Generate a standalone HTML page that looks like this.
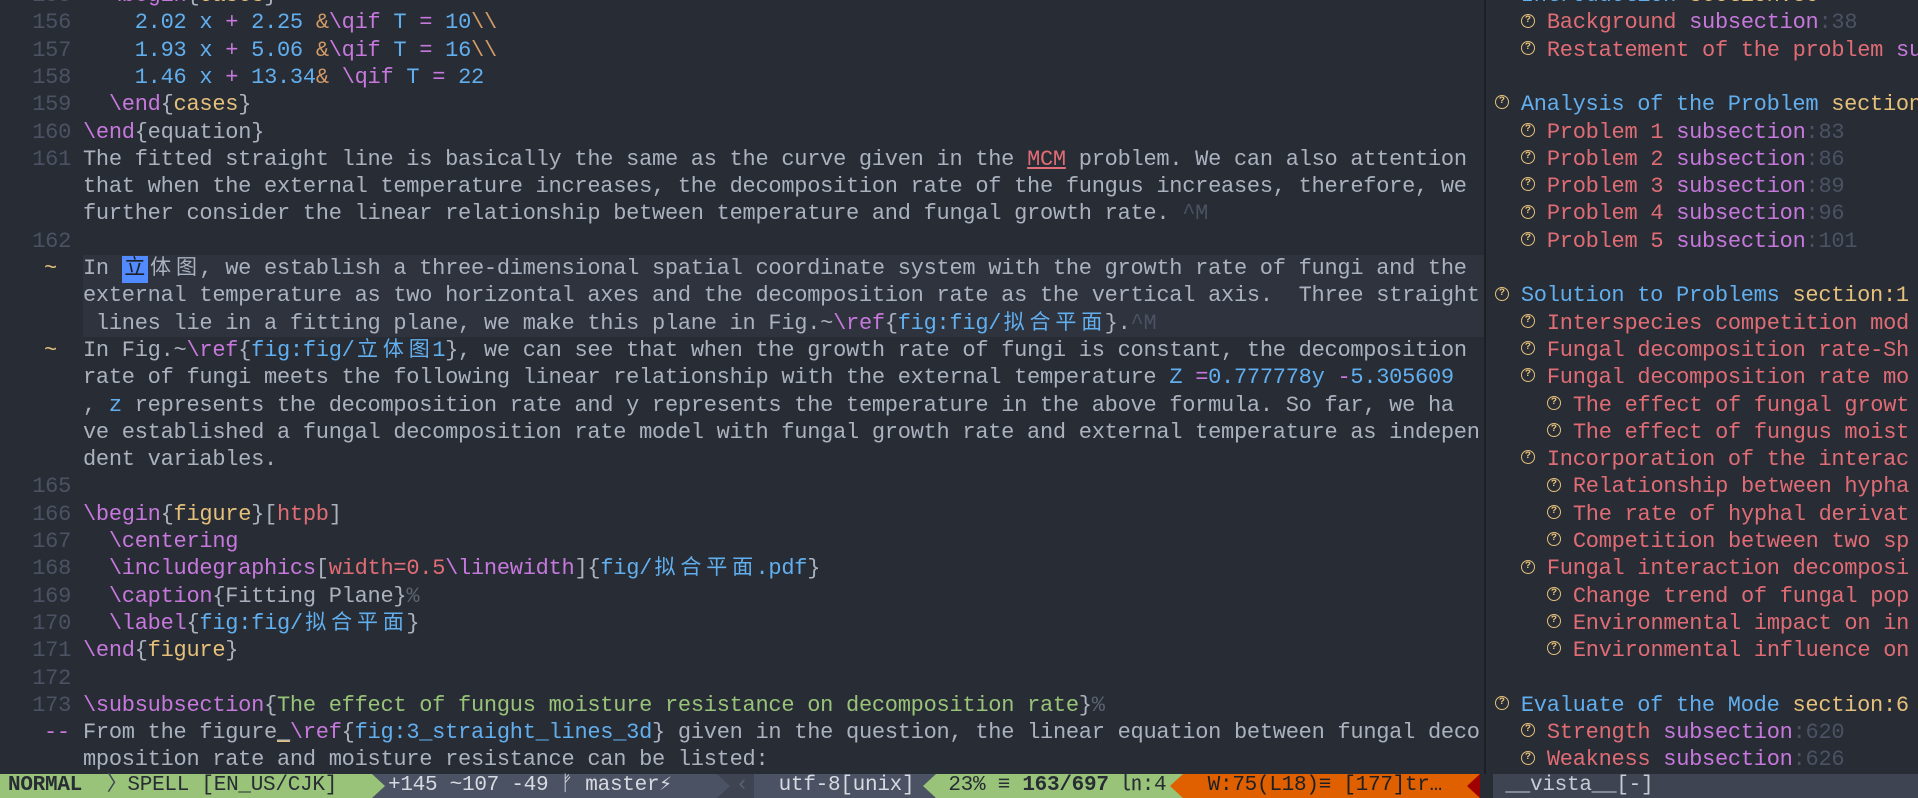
<!DOCTYPE html>
<html><head><meta charset="utf-8">
<style>
*{margin:0;padding:0;box-sizing:border-box}
body{width:1918px;height:798px;background:#282c34;overflow:hidden;position:relative;font-family:"Liberation Mono","Noto Sans CJK SC",monospace;font-size:22px;letter-spacing:-0.27px;color:#abb2bf}
.r{position:absolute;height:27.3px;line-height:27.3px;white-space:pre}
.t{left:83px}
.n{left:5px;width:66px;text-align:right;color:#4b5263}
.s{left:44px;color:#e5c07b}
.k{display:inline-block;width:25.86px;letter-spacing:0;text-align:center;font-size:21px}
.P{color:#c678dd}.Y{color:#e5c07b}.B{color:#61afef}.O{color:#d19a66}.R{color:#e06c75}.G{color:#98c379}.C{color:#5c6370}.D{color:#4b5263}
.cl{position:absolute;left:83px;width:1402px;height:81.9px;background:#2e333d}
.sep{position:absolute;left:1484px;top:0;width:2px;height:774px;background:#1c1f24}
.side{position:absolute;left:1486px;top:0;width:432px;height:774px;overflow:hidden}
.side .r{left:0}
.ic{display:inline-block;position:relative;top:-2px;width:14px;height:14px;border:1.7px solid #e5c07b;border-radius:50%;color:#e5c07b;font-size:10px;line-height:11px;text-align:center;font-weight:bold;letter-spacing:0;vertical-align:middle;margin-right:11.86px}
.st{position:absolute;top:774px;height:24px;line-height:24px;white-space:pre;font-size:21px}
</style></head><body>
<div class="cl" style="top:255px"></div>
<div class="sep"></div>

<div class="r n" style="top:-18px">155</div><div class="r t" style="top:-18px">  <span class="P">\begin</span>{<span class="Y">cases</span>}</div>
<div class="r n" style="top:9.35px">156</div><div class="r t" style="top:9.35px">    <span class="B">2.02 x</span> <span class="P">+</span> <span class="B">2.25</span> <span class="O">&amp;</span><span class="P">\qif</span> <span class="B">T</span> <span class="P">=</span> <span class="B">10</span><span class="O">\\</span></div>
<div class="r n" style="top:36.65px">157</div><div class="r t" style="top:36.65px">    <span class="B">1.93 x</span> <span class="P">+</span> <span class="B">5.06</span> <span class="O">&amp;</span><span class="P">\qif</span> <span class="B">T</span> <span class="P">=</span> <span class="B">16</span><span class="O">\\</span></div>
<div class="r n" style="top:63.95px">158</div><div class="r t" style="top:63.95px">    <span class="B">1.46 x</span> <span class="P">+</span> <span class="B">13.34</span><span class="O">&amp;</span> <span class="P">\qif</span> <span class="B">T</span> <span class="P">=</span> <span class="B">22</span></div>
<div class="r n" style="top:91.25px">159</div><div class="r t" style="top:91.25px">  <span class="P">\end</span>{<span class="Y">cases</span>}</div>
<div class="r n" style="top:118.55px">160</div><div class="r t" style="top:118.55px"><span class="P">\end</span>{equation}</div>
<div class="r n" style="top:145.85px">161</div><div class="r t" style="top:145.85px">The fitted straight line is basically the same as the curve given in the <span class="R" style="text-decoration:underline">MCM</span> problem. We can also attention</div>
<div class="r t" style="top:173.15px">that when the external temperature increases, the decomposition rate of the fungus increases, therefore, we</div>
<div class="r t" style="top:200.45px">further consider the linear relationship between temperature and fungal growth rate. <span class="D">^M</span></div>
<div class="r n" style="top:227.75px">162</div>
<div class="r s" style="top:255.05px">~</div><div class="r t" style="top:255.05px">In <span class="k" style="background:#528bff;color:#1c1f24">立</span><span class="k">体</span><span class="k">图</span>, we establish a three-dimensional spatial coordinate system with the growth rate of fungi and the</div>
<div class="r t" style="top:282.35px">external temperature as two horizontal axes and the decomposition rate as the vertical axis.  Three straight</div>
<div class="r t" style="top:309.65px"> lines lie in a fitting plane, we make this plane in Fig.~<span class="P">\ref</span>{<span class="B">fig:fig/<span class="k">拟</span><span class="k">合</span><span class="k">平</span><span class="k">面</span></span>}.<span class="D">^M</span></div>
<div class="r s" style="top:336.95px">~</div><div class="r t" style="top:336.95px">In Fig.~<span class="P">\ref</span>{<span class="B">fig:fig/<span class="k">立</span><span class="k">体</span><span class="k">图</span>1</span>}, we can see that when the growth rate of fungi is constant, the decomposition</div>
<div class="r t" style="top:364.25px">rate of fungi meets the following linear relationship with the external temperature <span class="B">Z</span> <span class="P">=</span><span class="B">0.777778y</span> <span class="P">-</span><span class="B">5.305609</span></div>
<div class="r t" style="top:391.55px">, <span class="B">z</span> represents the decomposition rate and y represents the temperature in the above formula. So far, we ha</div>
<div class="r t" style="top:418.85px">ve established a fungal decomposition rate model with fungal growth rate and external temperature as indepen</div>
<div class="r t" style="top:446.15px">dent variables.</div>
<div class="r n" style="top:473.45px">165</div>
<div class="r n" style="top:500.75px">166</div><div class="r t" style="top:500.75px"><span class="P">\begin</span>{<span class="Y">figure</span>}[<span class="R">htpb</span>]</div>
<div class="r n" style="top:528.05px">167</div><div class="r t" style="top:528.05px">  <span class="P">\centering</span></div>
<div class="r n" style="top:555.35px">168</div><div class="r t" style="top:555.35px">  <span class="P">\includegraphics</span>[<span class="R">width=0.5</span><span class="P">\linewidth</span>]{<span class="B">fig/<span class="k">拟</span><span class="k">合</span><span class="k">平</span><span class="k">面</span>.pdf</span>}</div>
<div class="r n" style="top:582.65px">169</div><div class="r t" style="top:582.65px">  <span class="P">\caption</span>{Fitting Plane}<span class="C">%</span></div>
<div class="r n" style="top:609.95px">170</div><div class="r t" style="top:609.95px">  <span class="P">\label</span>{<span class="B">fig:fig/<span class="k">拟</span><span class="k">合</span><span class="k">平</span><span class="k">面</span></span>}</div>
<div class="r n" style="top:637.25px">171</div><div class="r t" style="top:637.25px"><span class="P">\end</span>{<span class="Y">figure</span>}</div>
<div class="r n" style="top:664.55px">172</div>
<div class="r n" style="top:691.85px">173</div><div class="r t" style="top:691.85px"><span class="P">\subsubsection</span>{<span class="G">The effect of fungus moisture resistance on decomposition rate</span>}<span class="C">%</span></div>
<div class="r s" style="top:719.15px;color:#c678dd">--</div><div class="r t" style="top:719.15px">From the figure<span style="text-decoration:underline;text-decoration-color:#e5c07b">_</span><span class="P">\ref</span>{<span class="B">fig:3_straight_lines_3d</span>} given in the question, the linear equation between fungal deco</div>
<div class="r t" style="top:746.45px">mposition rate and moisture resistance can be listed:</div>

<div class="side">
<div class="r" style="top:-18px;left:9px"><span class="ic">?</span><span class="B">Introduction</span> <span class="Y">section:36</span></div>
<div class="r" style="top:9.35px;left:35px"><span class="ic">?</span><span class="R">Background</span> <span class="P">subsection</span><span class="D">:38</span></div>
<div class="r" style="top:36.65px;left:35px"><span class="ic">?</span><span class="R">Restatement of the problem</span> <span class="P">subsection</span></div>
<div class="r" style="top:91.25px;left:9px"><span class="ic">?</span><span class="B">Analysis of the Problem</span> <span class="Y">section:79</span></div>
<div class="r" style="top:118.55px;left:35px"><span class="ic">?</span><span class="R">Problem 1</span> <span class="P">subsection</span><span class="D">:83</span></div>
<div class="r" style="top:145.85px;left:35px"><span class="ic">?</span><span class="R">Problem 2</span> <span class="P">subsection</span><span class="D">:86</span></div>
<div class="r" style="top:173.15px;left:35px"><span class="ic">?</span><span class="R">Problem 3</span> <span class="P">subsection</span><span class="D">:89</span></div>
<div class="r" style="top:200.45px;left:35px"><span class="ic">?</span><span class="R">Problem 4</span> <span class="P">subsection</span><span class="D">:96</span></div>
<div class="r" style="top:227.75px;left:35px"><span class="ic">?</span><span class="R">Problem 5</span> <span class="P">subsection</span><span class="D">:101</span></div>
<div class="r" style="top:282.35px;left:9px"><span class="ic">?</span><span class="B">Solution to Problems</span> <span class="Y">section:1</span></div>
<div class="r" style="top:309.65px;left:35px"><span class="ic">?</span><span class="R">Interspecies competition mod</span></div>
<div class="r" style="top:336.95px;left:35px"><span class="ic">?</span><span class="R">Fungal decomposition rate-Sh</span></div>
<div class="r" style="top:364.25px;left:35px"><span class="ic">?</span><span class="R">Fungal decomposition rate mo</span></div>
<div class="r" style="top:391.55px;left:61px"><span class="ic">?</span><span class="R">The effect of fungal growt</span></div>
<div class="r" style="top:418.85px;left:61px"><span class="ic">?</span><span class="R">The effect of fungus moist</span></div>
<div class="r" style="top:446.15px;left:35px"><span class="ic">?</span><span class="R">Incorporation of the interac</span></div>
<div class="r" style="top:473.45px;left:61px"><span class="ic">?</span><span class="R">Relationship between hypha</span></div>
<div class="r" style="top:500.75px;left:61px"><span class="ic">?</span><span class="R">The rate of hyphal derivat</span></div>
<div class="r" style="top:528.05px;left:61px"><span class="ic">?</span><span class="R">Competition between two sp</span></div>
<div class="r" style="top:555.35px;left:35px"><span class="ic">?</span><span class="R">Fungal interaction decomposi</span></div>
<div class="r" style="top:582.65px;left:61px"><span class="ic">?</span><span class="R">Change trend of fungal pop</span></div>
<div class="r" style="top:609.95px;left:61px"><span class="ic">?</span><span class="R">Environmental impact on in</span></div>
<div class="r" style="top:637.25px;left:61px"><span class="ic">?</span><span class="R">Environmental influence on</span></div>
<div class="r" style="top:691.85px;left:9px"><span class="ic">?</span><span class="B">Evaluate of the Mode</span> <span class="Y">section:6</span></div>
<div class="r" style="top:719.15px;left:35px"><span class="ic">?</span><span class="R">Strength</span> <span class="P">subsection</span><span class="D">:620</span></div>
<div class="r" style="top:746.45px;left:35px"><span class="ic">?</span><span class="R">Weakness</span> <span class="P">subsection</span><span class="D">:626</span></div>
</div>

<!-- status line -->
<div class="st" style="left:0;width:372px;background:#98c379;color:#282c34"><b style="margin-left:8px">NORMAL</b>  <span style="color:#3e4452">〉</span>SPELL [EN_US/CJK]</div>
<div class="st" style="left:372px;width:345px;background:#4b5263;color:#c8ccd4"></div>
<div class="st" style="left:372px;width:0;border-left:13px solid #98c379;border-top:12px solid transparent;border-bottom:12px solid transparent"></div>
<div class="st" style="left:388px;color:#d7dae0">+145 ~107 -49 ᚠ master⚡</div>
<div class="st" style="left:717px;width:37px;background:#3e4452"></div>
<div class="st" style="left:717px;width:0;border-left:13px solid #4b5263;border-top:12px solid transparent;border-bottom:12px solid transparent"></div>
<div class="st" style="left:736px;color:#5c6370">‹</div>
<div class="st" style="left:754px;width:182px;background:#4b5263;color:#d7dae0">  utf-8[unix]</div>
<div class="st" style="left:923px;width:0;border-right:13px solid #98c379;border-top:12px solid transparent;border-bottom:12px solid transparent"></div>
<div class="st" style="left:936px;width:247px;background:#98c379;color:#282c34"> 23% ≡ <b>163/697</b> ㏑:4</div>
<div class="st" style="left:1170px;width:0;border-right:13px solid #e06000;border-top:12px solid transparent;border-bottom:12px solid transparent"></div>
<div class="st" style="left:1183px;width:284px;background:#e06000;color:#1c1f24">  W:75(L18)≡ [177]tr…</div>
<div class="st" style="left:1467px;width:13px;background:#e06000"></div>
<div class="st" style="left:1467px;width:0;border-right:13px solid #a00000;border-top:12px solid transparent;border-bottom:12px solid transparent"></div>
<div class="st" style="left:1493px;width:425px;background:#3e4452;color:#c8ccd4"> __vista__[-]</div>
</body></html>
